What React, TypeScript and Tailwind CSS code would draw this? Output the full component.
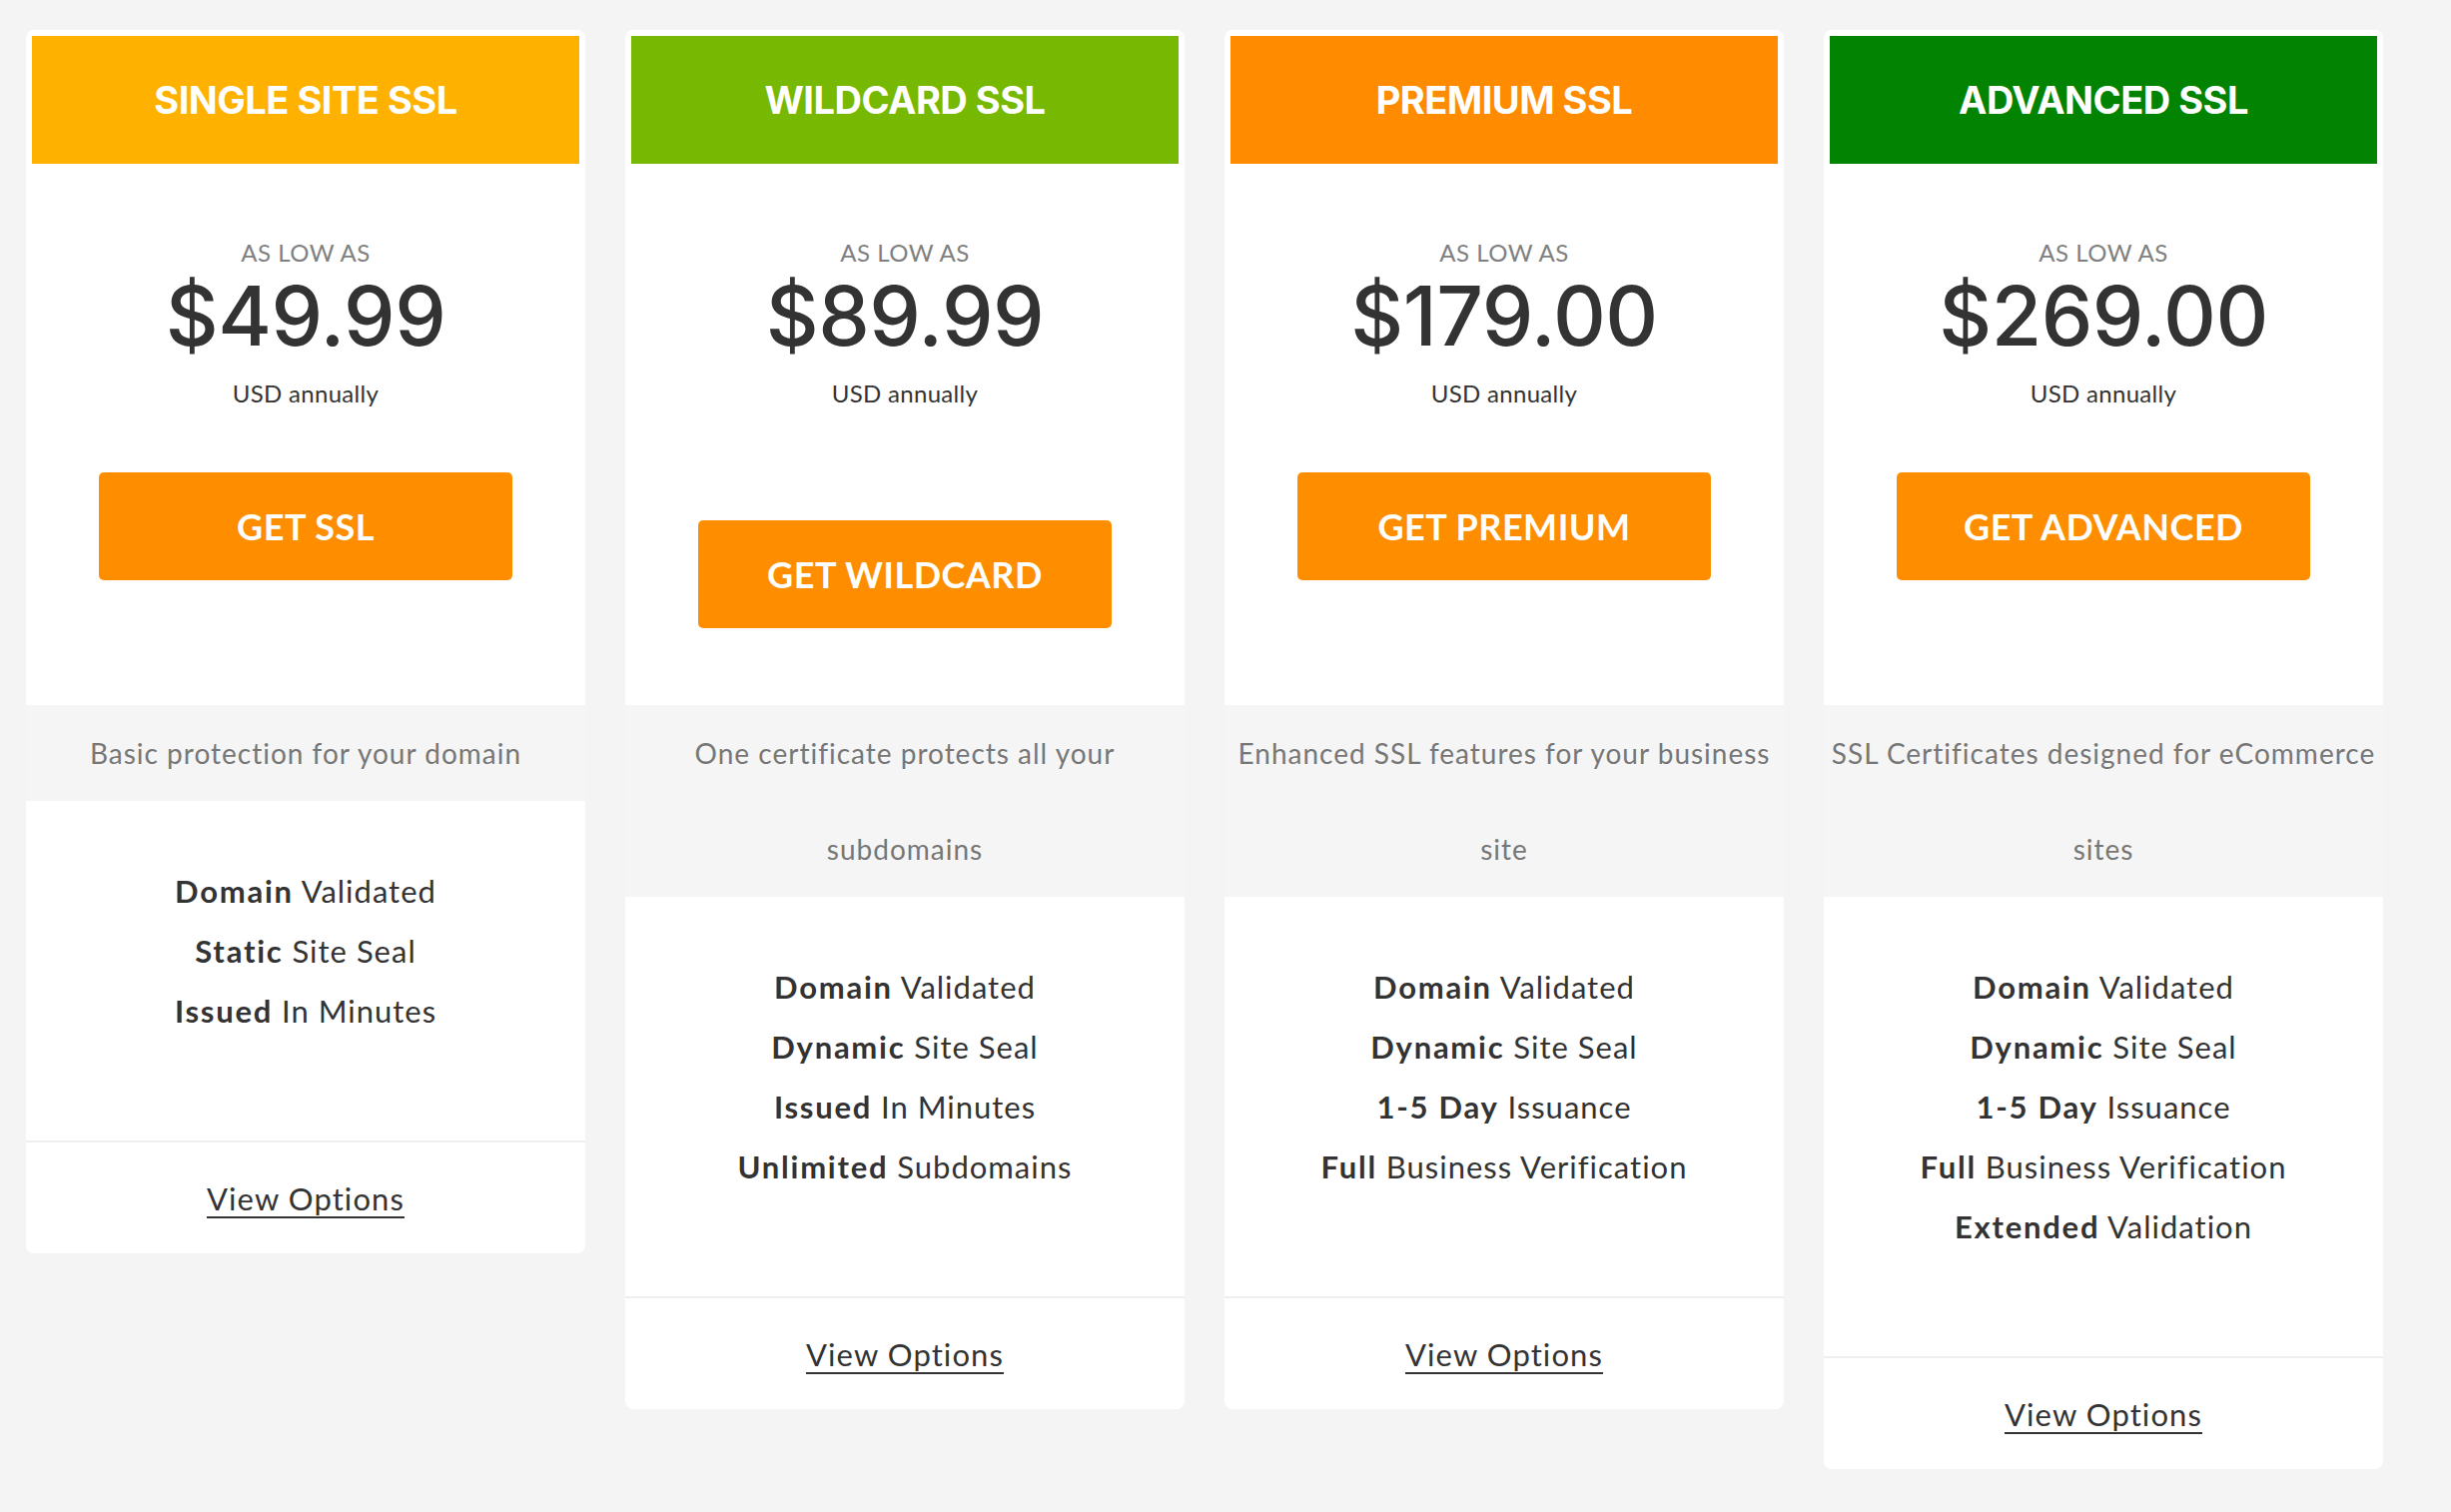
const PLANS = [
  {
    name: "SINGLE SITE SSL",
    color: "bg-[#ffb100]",
    price: "$49.99",
    cta: "GET SSL",
    ctaOffset: "mt-[67px]",
    desc: ["Basic protection for your domain"],
    features: [
      ["Domain", "Validated"],
      ["Static", "Site Seal"],
      ["Issued", "In Minutes"],
    ],
  },
  {
    name: "WILDCARD SSL",
    color: "bg-[#77b902]",
    price: "$89.99",
    cta: "GET WILDCARD",
    ctaOffset: "mt-[115px]",
    desc: ["One certificate protects all your", "subdomains"],
    features: [
      ["Domain", "Validated"],
      ["Dynamic", "Site Seal"],
      ["Issued", "In Minutes"],
      ["Unlimited", "Subdomains"],
    ],
  },
  {
    name: "PREMIUM SSL",
    color: "bg-[#ff8c00]",
    price: "$179.00",
    cta: "GET PREMIUM",
    ctaOffset: "mt-[67px]",
    desc: ["Enhanced SSL features for your business", "site"],
    features: [
      ["Domain", "Validated"],
      ["Dynamic", "Site Seal"],
      ["1-5 Day", "Issuance"],
      ["Full", "Business Verification"],
    ],
  },
  {
    name: "ADVANCED SSL",
    color: "bg-[#028302]",
    price: "$269.00",
    cta: "GET ADVANCED",
    ctaOffset: "mt-[67px]",
    desc: ["SSL Certificates designed for eCommerce", "sites"],
    features: [
      ["Domain", "Validated"],
      ["Dynamic", "Site Seal"],
      ["1-5 Day", "Issuance"],
      ["Full", "Business Verification"],
      ["Extended", "Validation"],
    ],
  },
];

type Plan = (typeof PLANS)[number];

function PlanCard({ plan }: { plan: Plan }) {
  return (
    <div className="flex w-[560px] flex-col rounded-[8px] bg-white">
      <div className="px-[6px] pt-[6px]">
        <div
          className={`flex h-[128px] items-center justify-center ${plan.color} font-['Inter',sans-serif] text-[38px] font-bold tracking-[-0.5px] text-white`}
        >
          {plan.name}
        </div>
      </div>

      <div className="flex h-[542px] flex-col items-center">
        <div className="mt-[77px] font-['Lato',sans-serif] text-[24px] leading-none tracking-[0.5px] text-[#808080]">
          AS LOW AS
        </div>
        <div className="mt-[11px] font-['Inter',sans-serif] text-[82px] font-medium leading-none tracking-[-0.5px] text-[#333]">
          {plan.price}
        </div>
        <div className="mt-[24px] font-['Lato',sans-serif] text-[24px] leading-none tracking-[0.3px] text-[#333]">
          USD annually
        </div>
        <button
          type="button"
          className={`${plan.ctaOffset} flex h-[108px] w-[414px] items-center justify-center rounded-[5px] bg-[#ff8d00] font-['Lato',sans-serif] text-[36px] font-bold tracking-[0.5px] text-white`}
        >
          {plan.cta}
        </button>
      </div>

      <div className="bg-[#f5f5f5] text-center font-['Lato',sans-serif] text-[28px] leading-[96px] tracking-[1px] text-[#777]">
        {plan.desc.map((line) => (
          <div key={line}>{line}</div>
        ))}
      </div>

      <div className="pt-[60px] pb-[100px] text-center font-['Lato',sans-serif] text-[31px] leading-[60px] tracking-[1px] text-[#333]">
        {plan.features.map(([strong, rest]) => (
          <div key={strong + rest}>
            <span className="font-bold tracking-[1.75px]">{strong}</span> {rest}
          </div>
        ))}
      </div>

      <div className="border-t-2 border-[#eeeeee] pt-[26px] pb-[25px] text-center font-['Lato',sans-serif] text-[31px] leading-[60px] tracking-[1.1px] text-[#333]">
        <a href="#" className="underline underline-offset-[6px] decoration-[2px]">
          View Options
        </a>
      </div>
    </div>
  );
}

export default function App() {
  return (
    <div className="min-h-screen bg-[#f4f4f4] pt-[30px] pl-[26px]">
      <div className="flex items-start gap-[40px]">
        {PLANS.map((plan) => (
          <PlanCard key={plan.name} plan={plan} />
        ))}
      </div>
    </div>
  );
}
